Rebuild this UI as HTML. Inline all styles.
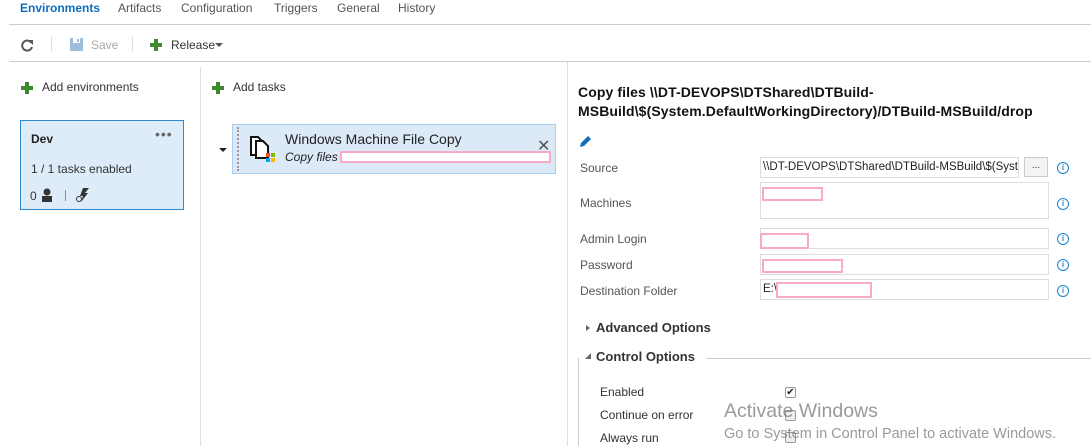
<!DOCTYPE html>
<html><head><meta charset="utf-8"><style>
*{margin:0;padding:0;box-sizing:border-box}
body{width:1091px;height:446px;overflow:hidden;background:#fff;font-family:"Liberation Sans",sans-serif;font-size:12px;color:#333;position:relative}
.a{position:absolute;white-space:nowrap}
.plus{position:absolute;width:12px;height:12px}
.plus:before{content:"";position:absolute;left:4px;top:0;width:4px;height:12px;background:#3c8b2f}
.plus:after{content:"";position:absolute;left:0;top:4px;width:12px;height:4px;background:#3c8b2f}
.lbl{position:absolute;left:580px;color:#555;font-size:12px}
.in{position:absolute;left:760px;width:289px;border:1px solid #ddd;background:#fff;white-space:nowrap}
.pk{position:absolute;border:2px solid #f9aac8}
.info{position:absolute;left:1057px;width:12px;height:12px;border:1.5px solid #1a86d0;border-radius:50%;color:#1a86d0;font-size:8px;font-weight:bold;text-align:center;line-height:9px}
.cb{position:absolute;left:785px;width:11px;height:11px;border:1px solid #999;border-radius:2px;background:#eee}
</style></head><body>
<div class="a" style="left:20px;top:1px;color:#106ebe;font-weight:bold">Environments</div>
<div class="a" style="left:118px;top:1px;color:#555">Artifacts</div>
<div class="a" style="left:181px;top:1px;color:#555">Configuration</div>
<div class="a" style="left:274px;top:1px;color:#555">Triggers</div>
<div class="a" style="left:337px;top:1px;color:#555">General</div>
<div class="a" style="left:398px;top:1px;color:#555">History</div>
<div class="a" style="left:9px;top:24px;width:1082px;height:1px;background:#ccc"></div>
<svg class="a" style="left:21px;top:39px" width="13" height="13" viewBox="0 0 13 13"><path d="M10.5 4A5 5 0 1 0 11 8" fill="none" stroke="#555" stroke-width="2"/><path d="M7 1h5v5z" fill="#555"/></svg>
<div class="a" style="left:51px;top:37px;width:1px;height:14px;background:#ddd"></div>
<svg class="a" style="left:70px;top:38px" width="13" height="13"><rect width="13" height="13" fill="#9dbfdc"/><rect x="3" y="0" width="7" height="5" fill="#fff"/><rect x="7" y="1" width="2" height="3" fill="#9dbfdc"/></svg>
<div class="a" style="left:91px;top:38px;color:#aaa">Save</div>
<div class="a" style="left:132px;top:37px;width:1px;height:14px;background:#ddd"></div>
<div class="plus" style="left:150px;top:39px"></div>
<div class="a" style="left:171px;top:38px;color:#333">Release</div>
<div class="a" style="left:215px;top:43px;border:4px solid transparent;border-top:4px solid #555;border-bottom:0"></div>
<div class="a" style="left:9px;top:61px;width:1082px;height:1px;background:#ccc"></div>
<div class="a" style="left:200px;top:67px;width:1px;height:379px;background:#ddd"></div>
<div class="a" style="left:567px;top:62px;width:1px;height:384px;background:#ddd"></div>
<div class="plus" style="left:21px;top:82px"></div>
<div class="a" style="left:42px;top:80px">Add environments</div>
<div class="a" style="left:20px;top:120px;width:164px;height:90px;background:#deecf9;border:1px solid #2a8ad4"></div>
<div class="a" style="left:31px;top:132px;font-weight:bold;color:#222">Dev</div>
<div class="a" style="left:155px;top:126px;font-size:14px;color:#666;letter-spacing:1px">•••</div>
<div class="a" style="left:31px;top:162px">1 / 1 tasks enabled</div>
<div class="a" style="left:30px;top:189px">0</div>
<svg class="a" style="left:41px;top:188px" width="12" height="14"><circle cx="6" cy="4" r="3.5" fill="#333"/><rect x="1" y="8" width="10" height="6" fill="#333"/></svg>
<div class="a" style="left:65px;top:190px;width:1px;height:11px;background:#5b9bd5"></div>
<svg class="a" style="left:76px;top:188px" width="14" height="14"><path d="M7 0h6l-4 5h3l-7 9 2-6h-3z" fill="#333"/><circle cx="3" cy="11" r="2.5" fill="none" stroke="#333"/></svg>
<div class="plus" style="left:212px;top:82px"></div>
<div class="a" style="left:233px;top:80px">Add tasks</div>
<div class="a" style="left:219px;top:148px;border:4px solid transparent;border-top:4px solid #222;border-bottom:0"></div>
<div class="a" style="left:232px;top:124px;width:324px;height:50px;background:#dce9f7;border:1px solid #a8cdef"></div>
<div class="a" style="left:237px;top:127px;width:3px;height:44px;border-left:2px dotted #999"></div>
<svg class="a" style="left:249px;top:135px" width="30" height="30"><path d="M2 2h7l4 4v14H2z" fill="#fff" stroke="#111" stroke-width="2"/><path d="M7 6h7l5 5v12H7z" fill="#fff" stroke="#111" stroke-width="2"/><rect x="17" y="18" width="4" height="4" fill="#f25022"/><rect x="22" y="18" width="4" height="4" fill="#7fba00"/><rect x="17" y="23" width="4" height="4" fill="#00a4ef"/><rect x="22" y="23" width="4" height="4" fill="#ffb900"/></svg>
<div class="a" style="left:285px;top:131px;font-size:14px;color:#222">Windows Machine File Copy</div>
<div class="a" style="left:285px;top:150px;font-style:italic;color:#222">Copy files</div>
<div class="pk" style="left:340px;top:151px;width:211px;height:12px;background:#fff"></div>
<div class="a" style="left:537px;top:136px;font-size:16px;color:#555">✕</div>
<div class="a" style="left:578px;top:83px;font-size:14px;font-weight:bold;color:#111;line-height:19px;letter-spacing:0.1px">Copy files \\DT-DEVOPS\DTShared\DTBuild-<br>MSBuild\$(System.DefaultWorkingDirectory)/DTBuild-MSBuild/drop</div>
<svg class="a" style="left:579px;top:134px" width="14" height="14"><path d="M1 13l1-4 7-7 3 3-7 7z" fill="#106ebe"/></svg>
<div class="lbl" style="top:161px">Source</div>
<div class="lbl" style="top:196px">Machines</div>
<div class="lbl" style="top:232px">Admin Login</div>
<div class="lbl" style="top:258px">Password</div>
<div class="lbl" style="top:284px">Destination Folder</div>
<div class="in" style="top:157px;width:259px;height:21px;font-size:11.5px;padding:3px 2px;overflow:hidden;color:#222">\\DT-DEVOPS\DTShared\DTBuild-MSBuild\$(System</div>
<div class="a" style="left:1024px;top:157px;width:24px;height:20px;border:1px solid #ccc;background:#f4f4f4;text-align:center;font-size:10px;line-height:16px">...</div>
<div class="in" style="top:182px;height:37px"></div>
<div class="in" style="top:228px;height:21px"></div>
<div class="in" style="top:254px;height:21px"></div>
<div class="in" style="top:279px;height:21px;padding:3px 2px;font-size:11.5px;color:#222">E:\</div>
<div class="pk" style="left:762px;top:187px;width:61px;height:14px"></div>
<div class="pk" style="left:760px;top:233px;width:49px;height:16px"></div>
<div class="pk" style="left:762px;top:259px;width:81px;height:14px"></div>
<div class="pk" style="left:776px;top:282px;width:96px;height:16px"></div>
<div class="info" style="top:162px">i</div>
<div class="info" style="top:198px">i</div>
<div class="info" style="top:233px">i</div>
<div class="info" style="top:259px">i</div>
<div class="info" style="top:285px">i</div>
<div class="a" style="left:586px;top:325px;border:3px solid transparent;border-left:4px solid #666;border-right:0"></div>
<div class="a" style="left:596px;top:320px;font-size:13px;font-weight:bold;color:#333">Advanced Options</div>
<div class="a" style="left:585px;top:353px;border-left:6px solid transparent;border-bottom:6px solid #666"></div>
<div class="a" style="left:596px;top:349px;font-size:13px;font-weight:bold;color:#333">Control Options</div>
<div class="a" style="left:706px;top:358px;width:385px;height:1px;background:#ccc"></div>
<div class="a" style="left:578px;top:358px;width:1px;height:88px;background:#ccc"></div>
<div class="a" style="left:600px;top:385px;color:#333">Enabled</div>
<div class="a" style="left:600px;top:408px;color:#333">Continue on error</div>
<div class="a" style="left:600px;top:431px;color:#333">Always run</div>
<div class="cb" style="top:387px;background:#fff;font-size:10px;line-height:9px;text-align:center;color:#222">✔</div>
<div class="cb" style="top:410px"></div>
<div class="cb" style="top:432px"></div>
<div class="a" style="left:724px;top:400px;font-size:19.5px;color:rgba(120,120,120,.75)">Activate Windows</div>
<div class="a" style="left:724px;top:426px;font-size:14.5px;color:rgba(120,120,120,.75)">Go to System in Control Panel to activate Windows.</div>
</body></html>
